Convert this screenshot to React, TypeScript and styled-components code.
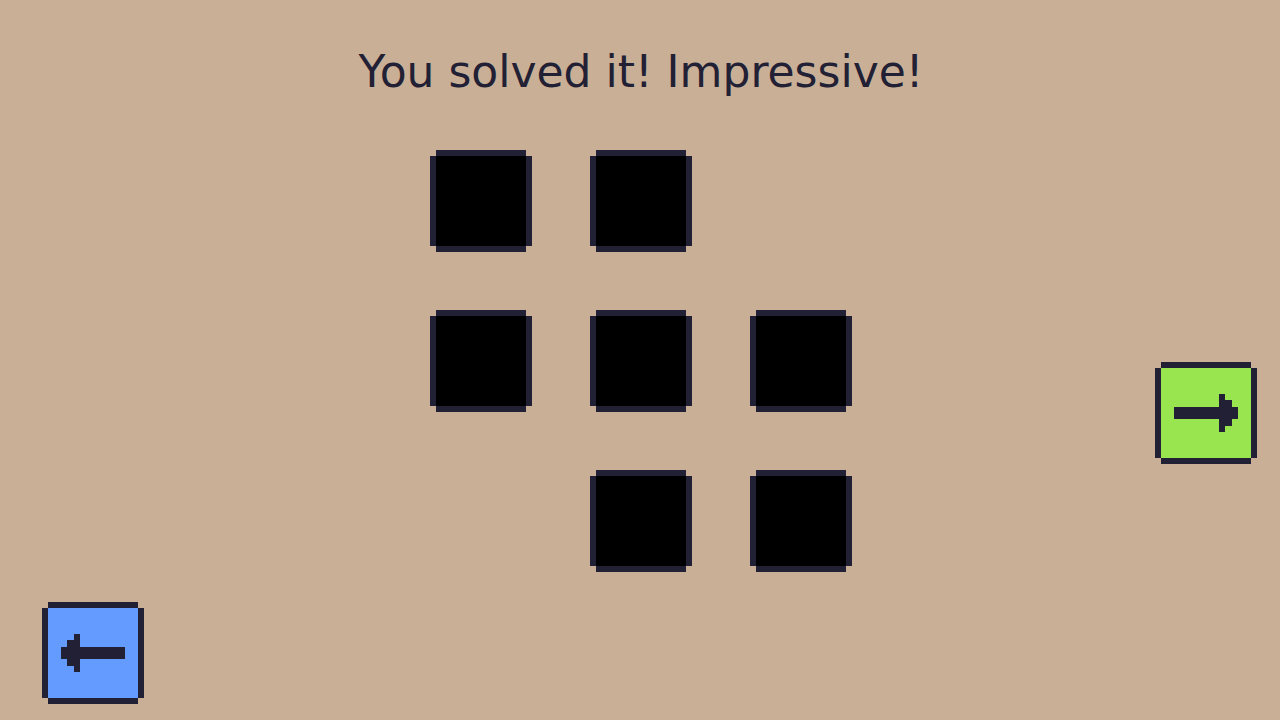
import React from "react";
import styled, { createGlobalStyle } from "styled-components";

const ink = "#222034";

const GlobalStyle = createGlobalStyle`
  body {
    margin: 0;
    background: #c9af95;
  }
`;

const Page = styled.div`
  box-sizing: border-box;
  min-height: 100vh;
  display: flex;
  flex-direction: column;
  padding: 0 29px 0 31px;
  color: ${ink};
  font-family: "DejaVu Sans", sans-serif;
`;

const Header = styled.header`
  padding: 46px 0 8px;
  text-align: center;
`;

const Message = styled.h1`
  margin: 0;
  font-size: 44px;
  line-height: 52px;
  font-weight: 400;
`;

const Stage = styled.main`
  flex: 1;
  display: grid;
  grid-template-columns: 1fr auto 1fr;
`;

/* The four shadows form a frame with notched corners. */
const PixelButton = styled.button<{ $fill: string }>`
  display: block;
  width: 90px;
  height: 90px;
  padding: 0;
  border: 0;
  background: ${(p) => p.$fill};
  box-shadow: 0 -6px ${ink}, 0 6px ${ink}, -6px 0 ${ink}, 6px 0 ${ink};
  cursor: pointer;
`;

const BackSlot = styled.nav`
  align-self: end;
  justify-self: start;
  padding: 0 0 22px 17px;
`;

const NextSlot = styled.nav`
  align-self: center;
  justify-self: end;
`;

const Board = styled.div`
  margin: 50px 0;
  display: grid;
  grid-template-columns: repeat(3, 90px);
  grid-template-rows: repeat(3, 90px);
  gap: 70px;
  align-content: start;
`;

const Arrow = styled.svg`
  display: block;
  width: 90px;
  height: 90px;
  fill: ${ink};
`;

const layout = [
  [1, 1, 0],
  [1, 1, 1],
  [0, 1, 1],
];

export default function App() {
  return (
    <>
      <GlobalStyle />
      <Page>
        <Header>
          <Message>You solved it! Impressive!</Message>
        </Header>
        <Stage>
          <BackSlot>
            <PixelButton $fill="#639bff" aria-label="Back">
              <Arrow viewBox="0 0 14 14" shapeRendering="crispEdges" aria-hidden="true">
                <path d="M12 6H5V4H4V5H3V6H2V8H3V9H4V10H5V8H12Z" />
              </Arrow>
            </PixelButton>
          </BackSlot>
          <Board>
            {layout.map((row, r) =>
              row.map((tile, c) =>
                tile ? (
                  <PixelButton key={`${r}-${c}`} $fill="#000" aria-label={`Tile ${r + 1}, ${c + 1}`} />
                ) : (
                  <span key={`${r}-${c}`} />
                )
              )
            )}
          </Board>
          <NextSlot>
            <PixelButton $fill="#99e550" aria-label="Next">
              <Arrow viewBox="0 0 14 14" shapeRendering="crispEdges" aria-hidden="true">
                <path d="M2 6H9V4H10V5H11V6H12V8H11V9H10V10H9V8H2Z" />
              </Arrow>
            </PixelButton>
          </NextSlot>
        </Stage>
      </Page>
    </>
  );
}
